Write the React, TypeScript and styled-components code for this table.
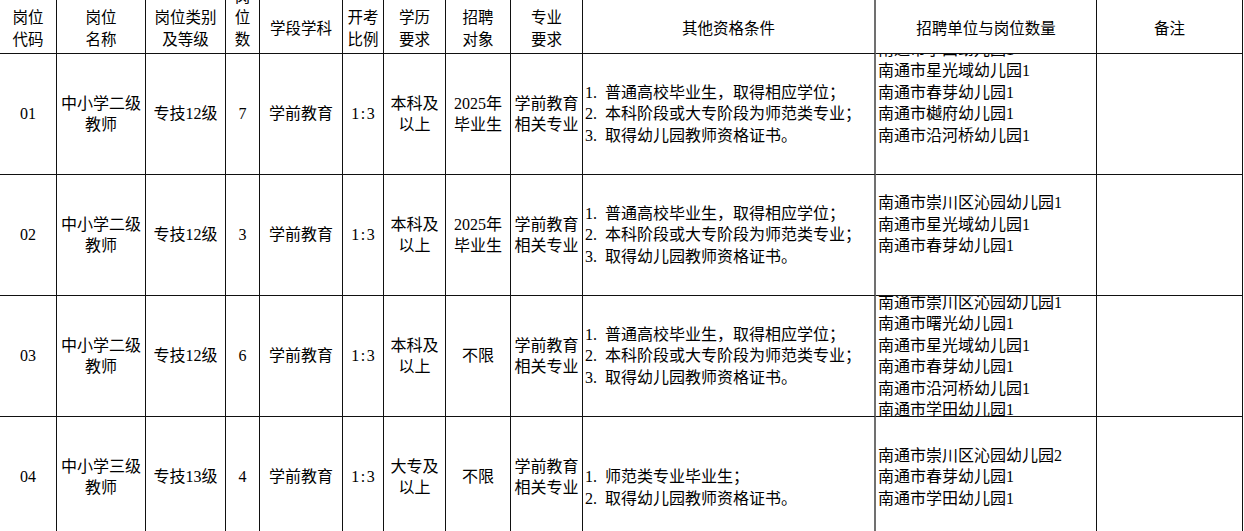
import styled, { createGlobalStyle } from "styled-components";

const GlobalStyle = createGlobalStyle`
    html, body {
        margin: 0;
        padding: 0;
        background: #ffffff;
        overflow: hidden;
    }

    body {
        font-family: "Liberation Serif", "Noto Sans CJK SC", serif;
        color: #000000;
    }
`

type Row = {
    code: string;
    name: string[];
    level: string;
    count: string;
    subject: string;
    ratio: string;
    edu: string[];
    target: string[];
    major: string[];
    cond: string[];
    units: string[];
};

const headers: string[][] = [
    ["岗位", "代码"],
    ["岗位", "名称"],
    ["岗位类别", "及等级"],
    ["岗", "位", "数", ""],
    ["学段学科"],
    ["开考", "比例"],
    ["学历", "要求"],
    ["招聘", "对象"],
    ["专业", "要求"],
    ["其他资格条件"],
    ["招聘单位与岗位数量"],
    ["备注"],
];

const cond3 = [
    "1.  普通高校毕业生，取得相应学位；",
    "2.  本科阶段或大专阶段为师范类专业；",
    "3.  取得幼儿园教师资格证书。",
];

const rows: Row[] = [
    {
        code: "01",
        name: ["中小学二级", "教师"],
        level: "专技12级",
        count: "7",
        subject: "学前教育",
        ratio: "1:3",
        edu: ["本科及", "以上"],
        target: ["2025年", "毕业生"],
        major: ["学前教育", "相关专业"],
        cond: cond3,
        units: [
            "南通市崇川区沁园幼儿园2",
            "南通市学田幼儿园1",
            "南通市星光域幼儿园1",
            "南通市春芽幼儿园1",
            "南通市樾府幼儿园1",
            "南通市沿河桥幼儿园1",
            "",
            "",
            "",
        ],
    },
    {
        code: "02",
        name: ["中小学二级", "教师"],
        level: "专技12级",
        count: "3",
        subject: "学前教育",
        ratio: "1:3",
        edu: ["本科及", "以上"],
        target: ["2025年", "毕业生"],
        major: ["学前教育", "相关专业"],
        cond: cond3,
        units: ["南通市崇川区沁园幼儿园1", "南通市星光域幼儿园1", "南通市春芽幼儿园1", ""],
    },
    {
        code: "03",
        name: ["中小学二级", "教师"],
        level: "专技12级",
        count: "6",
        subject: "学前教育",
        ratio: "1:3",
        edu: ["本科及", "以上"],
        target: ["不限"],
        major: ["学前教育", "相关专业"],
        cond: cond3,
        units: [
            "南通市崇川区沁园幼儿园1",
            "南通市曙光幼儿园1",
            "南通市星光域幼儿园1",
            "南通市春芽幼儿园1",
            "南通市沿河桥幼儿园1",
            "南通市学田幼儿园1",
        ],
    },
    {
        code: "04",
        name: ["中小学三级", "教师"],
        level: "专技13级",
        count: "4",
        subject: "学前教育",
        ratio: "1:3",
        edu: ["大专及", "以上"],
        target: ["不限"],
        major: ["学前教育", "相关专业"],
        cond: ["", "1.  师范类专业毕业生；", "2.  取得幼儿园教师资格证书。"],
        units: ["南通市崇川区沁园幼儿园2", "南通市春芽幼儿园1", "南通市学田幼儿园1"],
    },
];

const Sheet = styled.div`
    display: grid;
    grid-template-columns: 57px 89px 80px 34px 83px 41px 62px 65px 72px 293px 221px 146px;
    grid-template-rows: 54px repeat(4, 121px);
    width: 1243px;
    background: #ffffff;
`

const BaseCell = styled.div<{ $sep?: boolean }>`
    box-sizing: border-box;
    display: flex;
    flex-direction: column;
    justify-content: center;
    overflow: hidden;
    border-bottom: 1px solid #111111;
    border-right: ${p => (p.$sep ? "2px solid #707070" : "1px solid #111111")};
    font-size: 16px;
    line-height: 21.5px;
    white-space: pre;
`

const HeadCell = styled(BaseCell)`
    align-items: center;
    text-align: center;
    padding-top: 2px;
    font-family: "Noto Sans CJK SC", sans-serif;
    font-size: 15.5px;
`

const Cell = styled(BaseCell)<{ $left?: boolean }>`
    align-items: ${p => (p.$left ? "flex-start" : "center")};
    text-align: ${p => (p.$left ? "left" : "center")};
    padding: ${p => (p.$left ? "0 0 0 2px" : "0")};
`

const Line = styled.span`
    display: block;
    flex-shrink: 0;
    min-height: 21.5px;
`

// 宋体 digits are half-width and evenly spaced
const Ratio = styled(Line)`
    letter-spacing: 1.5px;
    margin-right: -1.5px;
`

const Lines = ({ items }: { items: string[] }) => (
    <>
        {items.map((t, i) => (
            <Line key={i}>{t || "\u00a0"}</Line>
        ))}
    </>
);

const App = () => {
    return (
        <>
            <GlobalStyle/>
            <Sheet>
                {headers.map((h, i) => (
                    <HeadCell key={i} $sep={i === 9}>
                        <Lines items={h}/>
                    </HeadCell>
                ))}
                {rows.map(r => (
                    <>
                        <Cell key={r.code + "a"}><Line>{r.code}</Line></Cell>
                        <Cell><Lines items={r.name}/></Cell>
                        <Cell><Line>{r.level}</Line></Cell>
                        <Cell><Line>{r.count}</Line></Cell>
                        <Cell><Line>{r.subject}</Line></Cell>
                        <Cell><Ratio>{r.ratio}</Ratio></Cell>
                        <Cell><Lines items={r.edu}/></Cell>
                        <Cell><Lines items={r.target}/></Cell>
                        <Cell><Lines items={r.major}/></Cell>
                        <Cell $left $sep><Lines items={r.cond}/></Cell>
                        <Cell $left><Lines items={r.units}/></Cell>
                        <Cell/>
                    </>
                ))}
            </Sheet>
        </>
    );
};

export default App;
